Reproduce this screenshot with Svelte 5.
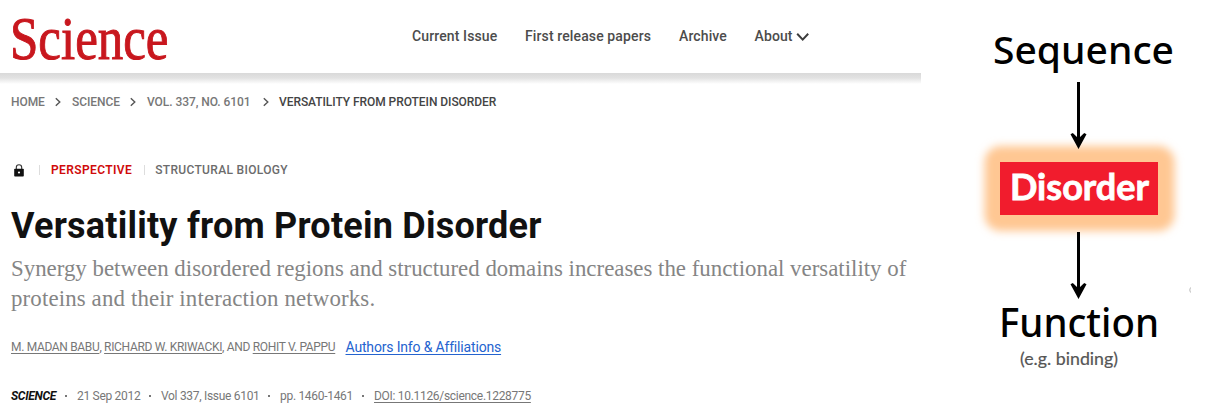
<script>
  const nav = ['Current Issue', 'First release papers', 'Archive'];
  const crumbs = ['HOME', 'SCIENCE', 'VOL. 337, NO. 6101'];
</script>

<div class="page">
  <div class="article">
    <header>
      <svg class="logo" width="190" height="73" viewBox="0 0 190 73" role="img" aria-label="Science">
        <text x="10" y="59" textLength="158.5" lengthAdjust="spacingAndGlyphs">Science</text>
      </svg>
      <nav>
        {#each nav as item}<span>{item}</span>{/each}
        <span class="about">About
          <svg width="14" height="10" viewBox="0 0 14 10"><path d="M1.2 1.8 6.7 7.6 12.2 1.8" fill="none" stroke="#3c3c3c" stroke-width="2" /></svg>
        </span>
      </nav>
    </header>
    <div class="shade"></div>

    <div class="crumbs">
      {#each crumbs as c}
        <span>{c}</span>
        <svg width="6" height="10" viewBox="0 0 6 10"><path d="M.8 1.2 4.8 5 .8 8.8" fill="none" stroke="#555" stroke-width="1.4" /></svg>
      {/each}
      <b>VERSATILITY FROM PROTEIN DISORDER</b>
    </div>

    <div class="kind">
      <svg width="10" height="13" viewBox="0 0 10 13">
        <path d="M2.3 5V3.4a2.7 2.7 0 0 1 5.4 0V5" fill="none" stroke="#333" stroke-width="1.1" />
        <rect x=".2" y="4.8" width="9.6" height="7.7" rx=".8" fill="#111" />
        <circle cx="5" cy="8.5" r="1.1" fill="#fff" />
      </svg>
      <i></i>
      <strong>PERSPECTIVE</strong>
      <i></i>
      <span>STRUCTURAL BIOLOGY</span>
    </div>

    <h1>Versatility from Protein Disorder</h1>
    <p class="summary">
      <span class="l1">Synergy between disordered regions and structured domains increases the functional versatility of</span>
      <span class="l2">proteins and their interaction networks.</span>
    </p>

    <div class="authors">
      <span class="names"><u>M. MADAN BABU</u>, <u>RICHARD W. KRIWACKI</u>, AND <u>ROHIT V. PAPPU</u></span>
      <a href="#affiliations">Authors Info &amp; Affiliations</a>
    </div>

    <div class="meta">
      <em>SCIENCE</em><span class="dot"></span>
      <span>21 Sep 2012</span><span class="dot"></span>
      <span>Vol 337, Issue 6101</span><span class="dot"></span>
      <span>pp. 1460-1461</span><span class="dot"></span>
      <u>DOI: 10.1126/science.1228775</u>
    </div>
  </div>

  <svg class="figure" width="288" height="412" viewBox="921 0 288 412">
    <defs>
      <filter id="glow" x="-20%" y="-30%" width="140%" height="160%"><feGaussianBlur stdDeviation="4" /></filter>
    </defs>
    <rect x="984.5" y="146" width="190" height="85" rx="16" fill="#ffc793" filter="url(#glow)" />
    <rect x="1000" y="162" width="158" height="53" fill="#f11c2d" />
    <g stroke="#000" stroke-width="3" fill="none">
      <path d="M1078.5 82V142" /><path d="M1078.5 232V292" />
    </g>
    <path d="M1078.5 149 1070.5 134.2 1072.8 133 1078.5 138.5 1084.2 133 1086.5 134.2Z" />
    <path d="M1078.5 299 1070.5 284.2 1072.8 283 1078.5 288.5 1084.2 283 1086.5 284.2Z" />
    <text class="label" x="993" y="64" font-size="37.5" textLength="181" lengthAdjust="spacingAndGlyphs">Sequence</text>
    <text class="white" x="1010" y="199.5" font-size="36.5" textLength="139" lengthAdjust="spacingAndGlyphs">Disorder</text>
    <text class="label" x="999" y="336.5" font-size="39" textLength="160" lengthAdjust="spacingAndGlyphs">Function</text>
    <text class="note" x="1020" y="364.5" font-size="17" textLength="98" lengthAdjust="spacingAndGlyphs">(e.g. binding)</text>
    <path d="M1190.5 287.5q-1.5 2.5 0 5" fill="none" stroke="#bbb" />
  </svg>
</div>

<style>
  :global(body) { background: #fff; }
  .page { display: flex; width: 1209px; height: 412px; overflow: hidden; font-family: Roboto, sans-serif; background: #fff; }
  .article { width: 921px; height: 412px; flex: none; white-space: nowrap; }
  .figure { flex: none; }
  header { display: flex; height: 73px; }
  .logo { flex: none; width: 190px; overflow: visible; }
  .logo text { font: 62px "Liberation Serif", serif; fill: #c8171e; stroke: #c8171e; stroke-width: 1; }
  nav { display: grid; grid-template-columns: 113px 154px 76px auto; margin-left: 222px; line-height: 73px; font-size: 14px; font-weight: 500; letter-spacing: .12px; color: #4c4c4c; }
  .about { margin-left: -.5px; }
  .about svg { vertical-align: -1px; }
  .shade { height: 11px; background: linear-gradient(#d9d9d9, #e2e2e2 45%, #fff); }
  .crumbs { display: grid; grid-template-columns: 44px 17px 58px 17px 116px 16px auto; align-items: center; height: 36px; padding-left: 11px; font-size: 12px; font-weight: 500; letter-spacing: -.06px; color: #777; }
  .crumbs b { font-weight: 500; color: #444; }
  .kind { display: flex; align-items: center; margin-top: 40px; height: 20px; padding-left: 14px; font-size: 12px; font-weight: 500; letter-spacing: .33px; color: #6c6c6c; }
  .kind i { width: 1px; height: 10px; background: #ddd; margin: 0 11px 0 15px; }
  .kind strong { font-weight: 600; color: #d00b0b; letter-spacing: .38px; }
  .kind strong + i { margin: 0 10px 0 12px; }
  h1 { margin: 26px 0 0; padding-left: 11px; height: 40px; line-height: 40px; font-size: 36px; font-weight: 700; letter-spacing: .23px; color: #111; }
  .summary { margin: 8px 0 0; padding-left: 11px; font: 22.87px/30px "Liberation Serif", serif; color: #858585; }
  .summary span { display: block; }
  .l2 { letter-spacing: .14px; }
  .authors { display: flex; align-items: center; height: 24px; margin-top: 21px; padding-left: 11px; color: #777; font-size: 12px; }
  .names { width: 334.5px; letter-spacing: -.33px; }
  .authors a { color: #2463cf; font-size: 14px; letter-spacing: -.17px; }
  u, a { text-decoration: underline; text-underline-offset: 2px; text-decoration-thickness: 1px; }
  .meta { display: grid; grid-template-columns: 54px 12px 72px 12px 107px 12px 82px 12px auto; align-items: center; height: 24px; margin-top: 25px; padding-left: 11px; font-size: 12px; letter-spacing: -.3px; color: #777; }
  .meta em { font-weight: 700; color: #111; }
  .dot { width: 2px; height: 2px; background: #777; }
  .label { font-family: "Noto Sans", sans-serif; font-weight: 500; }
  .white { font-family: Lato, sans-serif; font-weight: 700; fill: #fff; stroke: #fff; stroke-width: .8; }
  .note { font-family: Lato, sans-serif; fill: #555; stroke: #555; stroke-width: .2; }
</style>
